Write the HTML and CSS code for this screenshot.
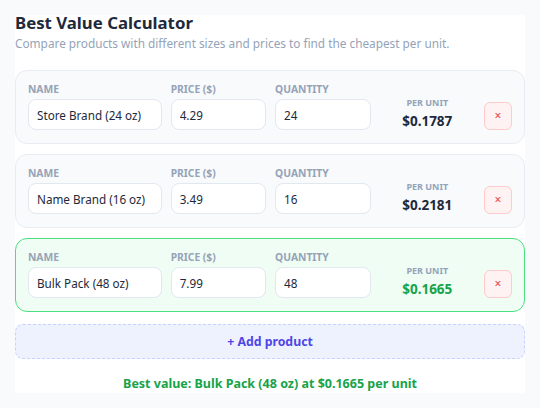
FILE: index.html
```html
<!DOCTYPE html>
<html>
<head>
<meta charset="utf-8">
<link rel="stylesheet" href="styles.css">
</head>
<body>
<main class="calc">
  <h1 class="title">Best Value Calculator</h1>
  <p class="subtitle">Compare products with different sizes and prices to find the cheapest per unit.</p>

  <div class="rows">
    <div class="row">
      <label class="field"><span class="label">Name</span><input class="input" value="Store Brand (24 oz)"></label>
      <label class="field"><span class="label">Price ($)</span><input class="input" value="4.29"></label>
      <label class="field"><span class="label">Quantity</span><input class="input" value="24"></label>
      <div class="unit"><span class="unit-label">Per unit</span><span class="unit-value">$0.1787</span></div>
      <button class="remove">×</button>
    </div>
    <div class="row">
      <label class="field"><span class="label">Name</span><input class="input" value="Name Brand (16 oz)"></label>
      <label class="field"><span class="label">Price ($)</span><input class="input" value="3.49"></label>
      <label class="field"><span class="label">Quantity</span><input class="input" value="16"></label>
      <div class="unit"><span class="unit-label">Per unit</span><span class="unit-value">$0.2181</span></div>
      <button class="remove">×</button>
    </div>
    <div class="row best">
      <label class="field"><span class="label">Name</span><input class="input" value="Bulk Pack (48 oz)"></label>
      <label class="field"><span class="label">Price ($)</span><input class="input" value="7.99"></label>
      <label class="field"><span class="label">Quantity</span><input class="input" value="48"></label>
      <div class="unit"><span class="unit-label">Per unit</span><span class="unit-value">$0.1665</span></div>
      <button class="remove">×</button>
    </div>
  </div>

  <button class="add">+ Add product</button>
  <p class="result">Best value: Bulk Pack (48 oz) at $0.1665 per unit</p>
</main>
</body>
</html>
```

FILE: styles.css
```css
html { background: #f8fafc; }
body {
  margin: 0;
  padding: 15px;
  font-family: "Noto Sans", "Open Sans", sans-serif;
  color: #1e293b;
}
.calc {
  background: #ffffff;
  width: 510px;
}
.title {
  margin: 0;
  padding-top: 1px;
  font-size: 16.8px;
  line-height: 14px;
  font-weight: 700;
  color: #1e293b;
}
.subtitle {
  margin: 4px 0 0;
  font-size: 11.8px;
  line-height: 18px;
  color: #94a3b8;
}
.rows {
  margin-top: 18px;
  display: flex;
  flex-direction: column;
  gap: 10px;
}
.row {
  display: grid;
  grid-template-columns: 1.4fr 1fr 1fr 1fr auto;
  gap: 9px;
  align-items: end;
  padding: 12px 12px 13px;
  background: #f8fafc;
  border: 1px solid #e8edf3;
  border-radius: 12px;
}
.row.best {
  background: #f0fdf4;
  border-color: #4ade80;
}
.field {
  display: flex;
  flex-direction: column;
  gap: 4px;
  min-width: 0;
}
.label,
.unit-label {
  font-size: 10.3px;
  line-height: 12px;
  font-weight: 700;
  text-transform: uppercase;
  color: #94a3b8;
}
.unit-label { font-size: 9px; }
.input {
  box-sizing: border-box;
  width: 100%;
  height: 31px;
  padding: 0 8px;
  border: 1px solid #e2e8f0;
  border-radius: 8px;
  background: #fff;
  font-family: inherit;
  font-size: 11.7px;
  color: #1e293b;
}
.unit {
  display: flex;
  flex-direction: column;
  align-items: center;
  gap: 3px;
}
.unit-value {
  font-size: 13.5px;
  line-height: 18px;
  font-weight: 700;
  color: #1e293b;
}
.best .unit-value { color: #16a34a; }
.remove {
  width: 28px;
  height: 28px;
  padding: 0;
  border: 1px solid #fecaca;
  border-radius: 6px;
  background: #fef2f2;
  color: #ef4444;
  font-family: inherit;
  font-size: 12px;
  line-height: 1;
}
.add {
  display: block;
  box-sizing: border-box;
  width: 100%;
  height: 35px;
  margin-top: 12px;
  border: 1px dashed #c7d2fe;
  border-radius: 8px;
  background: #eef2ff;
  color: #4f46e5;
  font-family: inherit;
  font-size: 12.3px;
  font-weight: 700;
}
.result {
  margin: 0;
  padding-top: 16px;
  text-align: center;
  font-size: 12.5px;
  line-height: 18px;
  font-weight: 700;
  color: #16a34a;
}
```
